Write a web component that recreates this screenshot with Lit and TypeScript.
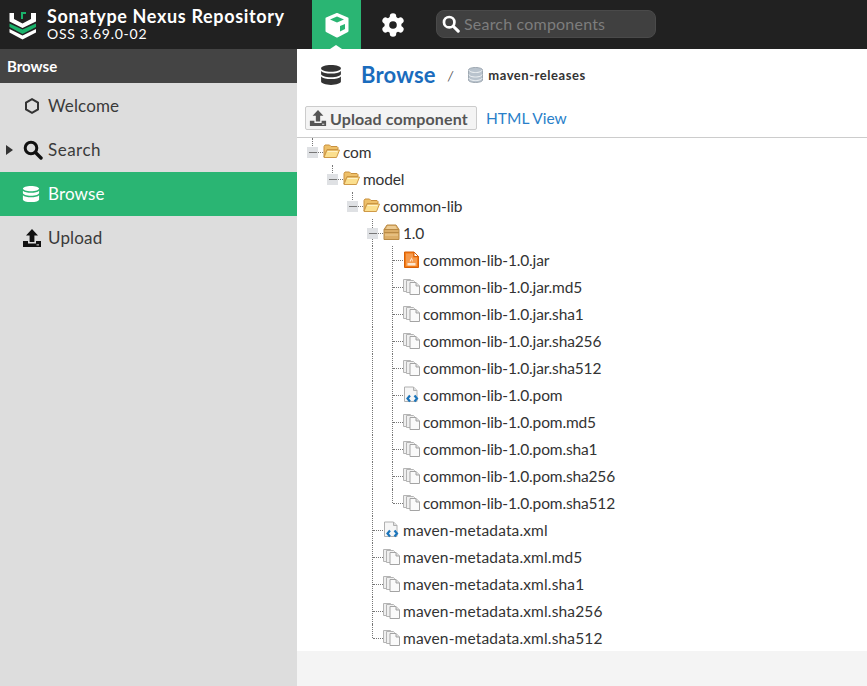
import { LitElement, html, css, svg, nothing } from "lit";
import { customElement } from "lit/decorators.js";

const db = (fill: string, size: number) => html`<svg width=${size} height=${size} viewBox="0 0 20 20"><path fill=${fill} d="M10 1c5 0 9 1.300 9 3s-4 3-9 3-9-1.300-9-3 4-3 9-3zM1 6.300C2.500 8 6 8.600 10 8.600s7.500-.6 9-2.300V9c0 1.700-4 3-9 3S1 10.700 1 9zM1 11.300c1.500 1.700 5 2.300 9 2.300s7.500-.6 9-2.300V16c0 1.700-4 3-9 3s-9-1.300-9-3z"/></svg>`;
const search = (c: string, s: number) => html`<svg width=${s} height=${s} viewBox="0 0 20 20"><circle cx="8" cy="8" r="5.800" fill="none" stroke=${c} stroke-width="3"/><path d="M12.500 12.500l5.500 5.500" stroke=${c} stroke-width="3.400" stroke-linecap="round"/></svg>`;
const upload = (c: string, s: number, bg: string) => html`<svg width=${s} height=${s} viewBox="0 0 20 20"><path fill=${c} d="M10 1l6 6.500h-3.600V14H7.600V7.500H4zM1 13h5v2.500h8V13h5v6H1z"/><rect x="14.500" y="16.400" width="2.500" height="1" fill=${bg}/></svg>`;
const folder = svg`<path d="M1 14V3.500l1-1.500h4.500L8 3.500h6l1 1v2H4z" fill="#eec069" stroke="#c9913f"/><path d="M1 14.500L4 7h12.500l-3 7.500z" fill="#fbdf8e" stroke="#cf9a48"/><path d="M4.500 8.500h10" stroke="#fff2c6" fill="none"/>`;
const box = svg`<path d="M1 5.500L4 1h9l3 4.500v10H1z" fill="#dcae68" stroke="#b98a45"/><path d="M4.500 2h8l1.500 3H3z" fill="#eccb93"/><path d="M1 5.500h15M1 8.500h15" stroke="#b98a45" fill="none"/><path d="M2 10h13v2H2z" fill="#e6bf80"/>`;
const jar = svg`<path d="M1.500 1h9.500l4.500 4.500v11h-14z" fill="#f47a12" stroke="#d65f08"/><path d="M3 2.500h7v4h4v8.500H3z" fill="#f59a4d"/><path d="M11 1v4.500h4.500z" fill="#fff" stroke="#d65f08"/><path d="M8.500 5c1 2.500-2.500 3.500-1.500 6 .8-1.200 2-2 2-3.500 1.200 1.300 1.200 2.500.5 3.500zM4.500 12h8v2.500h-8z" fill="#fde8d2"/>`;
const copies = svg`<path d="M.5 1.500h7l1 1v11h-8z" fill="#eee" stroke="#b4b4b4"/><path d="M3.500 2.500h7l1 1v11h-8z" fill="#f0f0f0" stroke="#b4b4b4"/><path d="M7 4.500h6l3.500 3.500v8.500H7z" fill="#fafafa" stroke="#a4a4a4"/><path d="M13 4.500V8h3.500" fill="#ddd" stroke="#a4a4a4"/>`;
const xml = svg`<path d="M1.500 1h9l3.500 3.500v11h-12.500z" fill="#f6f6f6" stroke="#b0b0b0"/><path d="M10.500 1v3.500H14" fill="#ddd" stroke="#b0b0b0"/><path d="M7 9.500L4.500 12.500 7 15.500M11.500 9.500L14 12.500 11.500 15.500" fill="none" stroke="#1b75bb" stroke-width="2.200"/>`;
const icons: Record<string, unknown> = { folder, box, jar, copies, xml };

type Row = { t: string; i: string; d: number; last?: boolean; open?: boolean };
const suffix = (p: string) => [".md5", ".sha1", ".sha256", ".sha512"].map((s) => p + s);
const rows: Row[] = [
  { t: "com", i: "folder", d: 0, open: true, last: true },
  { t: "model", i: "folder", d: 1, open: true, last: true },
  { t: "common-lib", i: "folder", d: 2, open: true, last: true },
  { t: "1.0", i: "box", d: 3, open: true },
  { t: "common-lib-1.0.jar", i: "jar", d: 4 },
  ...suffix("common-lib-1.0.jar").map((t) => ({ t, i: "copies", d: 4 })),
  { t: "common-lib-1.0.pom", i: "xml", d: 4 },
  ...suffix("common-lib-1.0.pom").map((t, n) => ({ t, i: "copies", d: 4, last: n === 3 })),
  { t: "maven-metadata.xml", i: "xml", d: 3 },
  ...suffix("maven-metadata.xml").map((t, n) => ({ t, i: "copies", d: 3, last: n === 3 })),
];

@customElement("app-root")
export class AppRoot extends LitElement {
  static styles = css`
    :host { display: block; width: 867px; height: 686px; overflow: hidden; font-family: Lato, "Open Sans", sans-serif; color: #333; background: #f4f4f4; }
    * { box-sizing: border-box; }
    svg { display: block; flex: none; }
    .top { height: 49px; background: #212121; display: flex; align-items: stretch; color: #fff; }
    .brand { width: 297px; display: flex; align-items: center; padding-left: 8px; gap: 9px; }
    .brand-text { display: flex; flex-direction: column; padding-bottom: 1px; }
    .brand-name { font-size: 18px; font-weight: 700; line-height: 20px; letter-spacing: .65px; }
    .brand-ver { font-size: 14px; letter-spacing: .75px; line-height: 16px; }
    .tab { width: 49px; margin-left: 15px; background: #2ab573; display: flex; align-items: center; justify-content: center; position: relative; }
    .tab::after { content: ""; position: absolute; left: 18px; bottom: 0; border: 6px solid transparent; border-top: 0; border-bottom: 4px solid #fff; }
    .gear { width: 64px; display: flex; align-items: center; justify-content: center; }
    .searchbox { width: 220px; height: 28px; margin: 10px 0 0 11px; background: #404040; border: 1px solid #4a4a4a; border-radius: 8px; display: flex; align-items: center; gap: 4px; padding: 0 0 1px 5px; font-size: 16px; color: #7d7d7d; letter-spacing: .2px; }
    .main { display: flex; height: 637px; }
    .side { width: 297px; background: #ddd; flex: none; }
    .side-h { height: 34px; background: #444; color: #fff; font-weight: 700; font-size: 15px; display: flex; align-items: center; padding-left: 7px; }
    .gap { height: 1px; }
    .item { height: 44px; display: flex; align-items: center; font-size: 17px; letter-spacing: .15px; color: #3a3a3a; position: relative; padding-bottom: 1px; }
    .ic { width: 48px; display: flex; justify-content: flex-end; padding-right: 8px; }
    .ic.wide { padding-right: 5px; margin-right: 0; width: 48px; }
    .ic.up { padding-right: 6px; }
    .item.s { letter-spacing: .5px; }
    .item.on { background: #2ab573; color: #fff; }
    .tri { position: absolute; left: 6px; top: 17px; border-left: 7px solid #333; border-top: 5px solid transparent; border-bottom: 5px solid transparent; }
    .content { flex: 1; }
    .panel { background: #fff; height: 602px; }
    .crumb { height: 51px; display: flex; align-items: center; padding-left: 23px; }
    .crumb h1 { margin: 0 0 0 19px; font-size: 22px; font-weight: 700; color: #1a6cbd; letter-spacing: .2px; }
    .sep { margin: 2px 15px 0 12px; font-size: 13px; color: #555; font-style: italic; }
    .repo { margin-left: 5px; font-size: 13px; font-weight: 700; color: #333; letter-spacing: .55px; }
    .tools { height: 38px; padding: 6px 8px 0; display: flex; align-items: flex-start; border-bottom: 1px solid #ccc; gap: 9px; }
    .btn { height: 24px; width: 172px; display: flex; align-items: center; gap: 3px; padding-left: 3px; background: #f4f4f4; border: 1px solid #ccc; border-radius: 2px; font-size: 16px; font-weight: 700; color: #555; letter-spacing: .12px; }
    .link { font-size: 15.500px; color: #2a7fc9; line-height: 24px; }
    .tree { padding-left: 6px; }
    .row { height: 27px; display: flex; align-items: center; font-size: 15.500px; letter-spacing: -.15px; }
    .row.mv { letter-spacing: .15px; }
    .cell { width: 20px; height: 27px; flex: none; position: relative; }
    .v::before { content: ""; position: absolute; left: 9px; top: 0; bottom: 0; border-left: 1px dotted #777; }
    .end::before { content: ""; position: absolute; left: 9px; top: 0; height: 14px; border-left: 1px dotted #777; }
    .h::after { content: ""; position: absolute; left: 10px; top: 14px; width: 10px; border-top: 1px dotted #777; }
    .exp { position: absolute; left: 4px; top: 9px; width: 11px; height: 11px; background: #dfe1e4; display: flex; align-items: center; justify-content: center; z-index: 1; }
    .exp i { width: 8px; height: 1px; background: #777; display: block; }
    .icon { width: 20px; flex: none; }
    .label { white-space: nowrap; }
  `;

  cellsFor(r: Row) {
    const out = [];
    for (let k = 0; k < r.d; k++) {
      out.push(html`<span class="cell ${k === 3 ? "v" : ""}"></span>`);
    }
    out.push(html`<span class="cell ${r.last ? "end" : "v"} h">${r.open ? html`<span class="exp"><i></i></span>` : nothing}</span>`);
    return out;
  }

  render() {
    return html`
      <div class="top">
        <div class="brand">
          <svg width="30" height="30" viewBox="0 0 30 30">
            <path fill="#fff" d="M1.500 3h4.500v6l8.500 4.500L23 9V3h5v8.500L14.500 18 1.500 11.500z"/>
            <path fill="#1ab26b" d="M1.500 13.500l13 6 13.500-6v3.500l-13.500 7-13-7z"/>
            <path fill="#fff" d="M1.500 19l13 6.500L28 19v3.500l-13.500 7-13-7z"/>
            <path fill="#1ab26b" d="M13 2h2v7h-2zM13 2h5v2h-5z"/>
          </svg>
          <div class="brand-text"><span class="brand-name">Sonatype Nexus Repository</span><span class="brand-ver">OSS 3.69.0-02</span></div>
        </div>
        <div class="tab">
          <svg width="26" height="26" viewBox="0 0 26 26"><path fill="#fff" stroke="#fff" stroke-width="2" stroke-linejoin="round" d="M13 2l10.500 4.500v12.500L13 24.500 2.500 19V6.500z"/><path fill="#2ab573" d="M13 4.500l7 3-7 3-7-3z"/><path fill="#2ab573" d="M16 14l5-2v5l-5 2.500z"/></svg>
        </div>
        <div class="gear">
          <svg width="26" height="26" viewBox="0 0 26 26"><g stroke="#fff" stroke-width="6.500" stroke-linecap="round"><path d="M13 4.500v17M5.640 8.750l14.720 8.500M20.360 8.750l-14.720 8.500"/></g><circle cx="13" cy="13" r="8.500" fill="#fff"/><circle cx="13" cy="13" r="3.800" fill="#212121"/></svg>
        </div>
        <div class="searchbox">${search("#fff", 18)}<span>Search components</span></div>
      </div>
      <div class="main">
        <div class="side">
          <div class="side-h">Browse</div>
          <div class="gap"></div>
          <div class="item"><span class="ic"><svg width="16" height="18" viewBox="0 0 16 18"><path d="M8 2.200l6 3.400v6.800l-6 3.400-6-3.400V5.600z" fill="none" stroke="#333" stroke-width="2"/></svg></span>Welcome</div>
          <div class="item s"><span class="tri"></span><span class="ic wide">${search("#111", 20)}</span>Search</div>
          <div class="item on"><span class="ic">${db("#fff", 18)}</span>Browse</div>
          <div class="item"><span class="ic up">${upload("#111", 20, "#ddd")}</span>Upload</div>
        </div>
        <div class="content">
          <div class="panel">
            <div class="crumb">
              ${db("#333", 22)}
              <h1>Browse</h1>
              <span class="sep">/</span>
              <svg width="15" height="16" viewBox="0 0 15 16"><path d="M.5 3C.5 1.500 3.500.5 7.500.5s7 1 7 2.500v10c0 1.500-3 2.500-7 2.500s-7-1-7-2.500z" fill="#b9c3cd" stroke="#8f9aa5" stroke-width=".8"/><path d="M1 3c0 1.500 3 2.500 6.500 2.500S14 4.500 14 3M1 7.500C1 9 4 10 7.500 10S14 9 14 7.500M1 11c0 1.500 3 2.500 6.500 2.500S14 12.500 14 11" fill="none" stroke="#f0f3f5"/></svg>
              <span class="repo">maven-releases</span>
            </div>
            <div class="tools">
              <div class="btn">${upload("#555", 18, "#f4f4f4")}<span>Upload component</span></div>
              <span class="link">HTML View</span>
            </div>
            <div class="tree">
              ${rows.map((r) => html`<div class="row ${r.t.startsWith("maven") ? "mv" : ""}">
                ${this.cellsFor(r)}
                <span class="icon"><svg width="17" height="17" viewBox="0 0 17 17">${icons[r.i]}</svg></span>
                <span class="label">${r.t}</span>
              </div>`)}
            </div>
          </div>
        </div>
      </div>
    `;
  }
}
